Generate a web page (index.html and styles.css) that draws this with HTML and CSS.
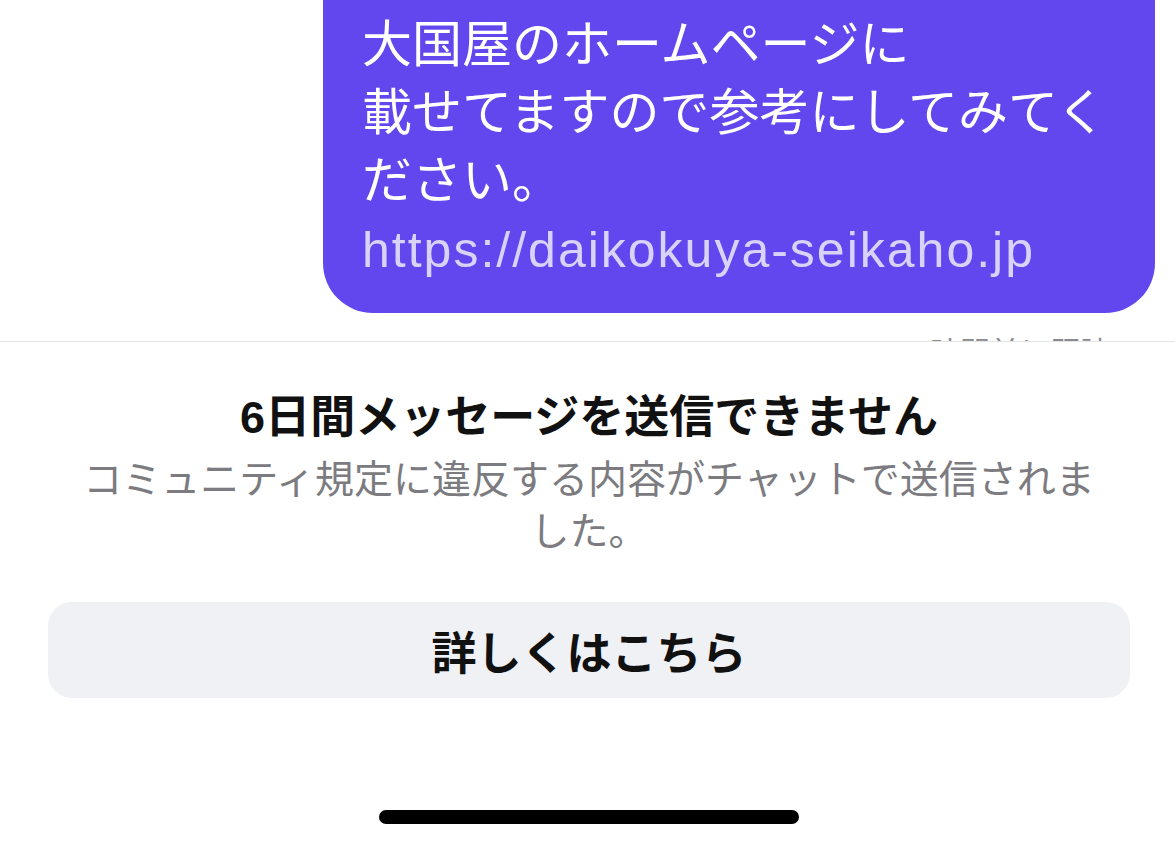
FILE: index.html
```html
<!DOCTYPE html>
<html lang="ja">
  <head>
    <meta charset="UTF-8">
    <title>チャット</title>
    <meta name="viewport" content="width=device-width, initial-scale=1.0"><link rel="stylesheet" href="styles.css">
  </head>
  <body>
    <div class="screen">

      <div class="chat">
        <div class="bubble">
          大国屋のホームページに<br>載せてますので参考にしてみてください。
          <span class="bubble-link">https://daikokuya-seikaho.jp</span>
        </div>
        <div class="receipt">1 時間前に既読</div>
      </div>

      <!-- ban notice sheet -->
      <div class="sheet">
        <h2 class="sheet-title">6日間メッセージを送信できません</h2>
        <p class="sheet-text">コミュニティ規定に違反する内容がチャットで送信されました。</p>
        <button class="more-btn">詳しくはこちら</button>
        <div class="home-bar"></div>
      </div>

    </div>
  </body>
</html>
```

FILE: styles.css
```css
* { box-sizing: border-box; }

body {
  margin: 0;
  padding: 0;
  background: #fff;
  font-family: "Liberation Sans", "Noto Sans CJK JP", sans-serif;
  color: #111;
}

.screen {
  height: 845px;
  display: flex;
  flex-direction: column;
  overflow: hidden;
}

.chat {
  height: 341px;
  flex-shrink: 0;
  overflow: hidden;
}

.bubble {
  margin: -40px 20px 0 auto;
  width: 832px;
  padding: 51px 39px 29px;
  background: #6246ee;
  color: #fff;
  font-size: 50px;
  line-height: 68px;
  border-radius: 0 0 50px 50px;
}

.bubble-link {
  display: block;
  margin-top: 1px;
  color: #d9d3fb;
  letter-spacing: 2px;
}

.receipt {
  margin-top: 20px;
  padding-right: 65px;
  text-align: right;
  font-size: 30px;
  line-height: 40px;
  color: #8a8a8e;
}

.sheet {
  flex: 1;
  display: flex;
  flex-direction: column;
  align-items: center;
  border-top: 1px solid #e4e4e6;
  padding: 0 45px 0 48px;
  background: #fff;
}

.sheet-title {
  margin: 48px 0 0;
  font-size: 45px;
  line-height: 56px;
  font-weight: bold;
  color: #111;
}

.sheet-text {
  margin: 8px 0 0;
  padding: 0 22px;
  font-size: 39px;
  line-height: 52px;
  color: #7b7b80;
  text-align: center;
}

.more-btn {
  margin-top: 44px;
  width: 100%;
  height: 96px;
  border: none;
  border-radius: 24px;
  background: #f0f1f5;
  font-family: inherit;
  font-size: 45px;
  font-weight: bold;
  color: #111;
  cursor: pointer;
}

.home-bar {
  margin-top: auto;
  margin-bottom: 21px;
  width: 420px;
  height: 14px;
  border-radius: 7px;
  background: #000;
}
```
